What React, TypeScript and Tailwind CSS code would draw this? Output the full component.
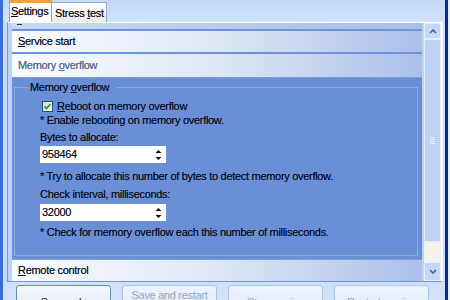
import React from "react";

function U({ children }: { children: React.ReactNode }) {
  return <span className="underline decoration-[1px] underline-offset-[1px]">{children}</span>;
}

function Spinner() {
  return (
    <svg width="7" height="12" viewBox="0 0 7 12" className="mr-[4px] shrink-0">
      <polygon points="0.5,4 3.5,1 6.5,4" fill="#111" />
      <polygon points="0.5,8 3.5,11 6.5,8" fill="#111" />
    </svg>
  );
}

function NumberBox({ value, className }: { value: string; className: string }) {
  return (
    <div className={"w-[126px] h-[17px] bg-white flex items-center justify-between pl-[2px] " + className}>
      <span>{value}</span>
      <Spinner />
    </div>
  );
}

function Chevron({ down }: { down?: boolean }) {
  return (
    <svg width="8" height="5" viewBox="0 0 8 5">
      <polyline
        points={down ? "1,1 4,4 7,1" : "1,4 4,1 7,4"}
        fill="none"
        stroke="#4a5f8a"
        strokeWidth="1.6"
      />
    </svg>
  );
}

export default function App() {
  return (
    <div className="w-[450px] h-[300px] overflow-hidden flex font-['Liberation_Sans',Arial,sans-serif] text-[11px] tracking-[-0.3px] leading-[13px] text-[#050a18] [text-shadow:0_0_0.3px_rgba(0,0,0,0.5)] bg-[#c7dcf8]">
      <div className="w-[3px] shrink-0 bg-[#3a6bd6]" />
      <div className="w-[442px] shrink-0 flex flex-col overflow-hidden">
        {/* tab strip */}
        <div className="h-[22px] shrink-0 flex items-end pl-[6px] bg-gradient-to-b from-[#c3d9f8] to-[#d0e3fb]">
          <div className="h-[22px] w-[43px] shrink-0 bg-[#fcfcfe] border-t-[3px] border-t-[#f0a233] border-x border-x-[#8fa3c2] pl-[1px] pt-[2px]">
            <U>S</U>ettings
          </div>
          <div className="h-[20px] w-[55px] shrink-0 bg-gradient-to-b from-white to-[#ebeae4] border-t border-r border-[#97a7c4] pl-[3px] pt-[4px]">
            Stress <U>t</U>est
          </div>
        </div>

        {/* main panel */}
        <div className="h-[260px] shrink-0 ml-[4px] w-[436px] flex border-t border-t-white border-l border-l-[#6f92d8] border-r-2 border-r-white border-b border-b-[#6f92d8] bg-[#bdd3f6] pl-[4px]">
          {/* accordion */}
          <div className="w-[410px] shrink-0 flex flex-col">
            <div className="h-[6px] shrink-0 bg-gradient-to-r from-[#c9d8f3] to-[#aac0e8]">
              <div className="ml-[5px] w-[5px] h-[1px] bg-[#2a3350] mt-[1px]" />
            </div>
            <div className="h-[2px] shrink-0 bg-[#6e92d9]" />
            <div className="h-[21px] shrink-0 flex items-center pl-[6px] bg-gradient-to-r from-[#f9fbff] via-[#dfe7f6] to-[#abc0e8]">
              <span>
                <U>S</U>ervice start
              </span>
            </div>
            <div className="h-[2px] shrink-0 bg-[#6e92d9]" />
            <div className="h-[23px] shrink-0 flex items-center pl-[6px] bg-gradient-to-r from-[#f9fbff] via-[#dfe7f6] to-[#abc0e8] text-[#55699a]">
              <span>
                Memory <U>o</U>verflow
              </span>
            </div>
            <div className="h-[1px] shrink-0 bg-[#7a9bdc]" />
            <div className="h-[181px] shrink-0 bg-[#6b8fd6] pl-[2px]">
              <fieldset className="mt-[3px] w-[404px] h-[175px] border border-[#8eaae6]">
                <legend className="ml-[13px] pl-[2px] pr-[8px] leading-[13px]">
                  Memory <U>o</U>verflow
                </legend>
                <div className="pt-[5px] pl-[25px] flex flex-col items-start">
                  <div className="h-[14px] flex items-center pl-[2px] gap-[4px]">
                    <div className="w-[11px] h-[11px] border border-[#1c5180] bg-gradient-to-br from-[#dcdcd6] to-white flex items-center justify-center">
                      <svg width="9" height="9" viewBox="0 0 9 9">
                        <polyline points="1.5,4.5 3.5,6.5 7.5,2" fill="none" stroke="#21a121" strokeWidth="1.8" />
                      </svg>
                    </div>
                    <span>
                      <U>R</U>eboot on memory overflow
                    </span>
                  </div>
                  <div className="h-[14px] flex items-center">* Enable rebooting on memory overflow.</div>
                  <div className="h-[14px] mt-[3px] flex items-center">Bytes to allocate:</div>
                  <NumberBox value="958464" className="mt-[2px]" />
                  <div className="h-[14px] mt-[6px] flex items-center">
                    * Try to allocate this number of bytes to detect memory overflow.
                  </div>
                  <div className="h-[14px] mt-[4px] flex items-center">Check interval, milliseconds:</div>
                  <NumberBox value="32000" className="mt-[3px]" />
                  <div className="h-[14px] mt-[4px] flex items-center">
                    * Check for memory overflow each this number of milliseconds.
                  </div>
                </div>
              </fieldset>
            </div>
            <div className="h-[1px] shrink-0 bg-[#7a9bdc]" />
            <div className="h-[21px] shrink-0 flex items-center pl-[6px] bg-gradient-to-r from-[#f9fbff] via-[#dfe7f6] to-[#abc0e8]">
              <span>
                <U>R</U>emote control
              </span>
            </div>
          </div>

          {/* scrollbar */}
          <div className="w-[17px] shrink-0 ml-[2px] flex flex-col bg-[#f2f1ea]">
            <div className="h-[16px] shrink-0 rounded-[2px] border border-[#e6eefc] bg-[#c4d7fa] flex items-center justify-center">
              <Chevron />
            </div>
            <div className="h-[203px] shrink-0 rounded-[2px] border border-[#e3ebfc] bg-[#bed2f8] flex items-center justify-center">
              <div className="w-[5px] h-[7px] flex flex-col justify-between">
                <div className="h-[1px] bg-[#e8effd]" />
                <div className="h-[1px] bg-[#e8effd]" />
                <div className="h-[1px] bg-[#e8effd]" />
                <div className="h-[1px] bg-[#e8effd]" />
              </div>
            </div>
            <div className="h-[20px] shrink-0" />
            <div className="h-[19px] shrink-0 rounded-[2px] border border-[#e6eefc] bg-[#c4d7fa] flex items-center justify-center">
              <Chevron down />
            </div>
          </div>
        </div>

        {/* buttons */}
        <div className="flex-1 flex gap-[11px] pl-[13px] pt-[3px] bg-gradient-to-b from-[#cde0fa] to-[#d8e7fb]">
          <button className="w-[95px] h-[34px] shrink-0 rounded-[3px] border border-[#6f85ad] bg-gradient-to-b from-[#f4f8fe] to-[#dce8fa] text-[#050a18] tracking-[-0.3px]">
            Save only
          </button>
          <button className="w-[95px] h-[34px] shrink-0 rounded-[3px] border border-[#b2c3dd] bg-gradient-to-b from-[#edf3fd] to-[#dce8fa] text-[#97a5bd] [text-shadow:none] tracking-[-0.3px] leading-[13px]">
            Save and restart
            <br />
            service
          </button>
          <button className="w-[95px] h-[34px] shrink-0 rounded-[3px] border border-[#b2c3dd] bg-gradient-to-b from-[#edf3fd] to-[#dce8fa] text-[#97a5bd] [text-shadow:none] tracking-[-0.3px]">
            Stop service
          </button>
          <button className="w-[95px] h-[34px] shrink-0 rounded-[3px] border border-[#b2c3dd] bg-gradient-to-b from-[#edf3fd] to-[#dce8fa] text-[#97a5bd] [text-shadow:none] tracking-[-0.3px]">
            Restart service
          </button>
        </div>
      </div>
      <div className="w-[3px] shrink-0 bg-[#0c2a8c]" />
      <div className="flex-1 bg-[#e2ecfa]" />
    </div>
  );
}
